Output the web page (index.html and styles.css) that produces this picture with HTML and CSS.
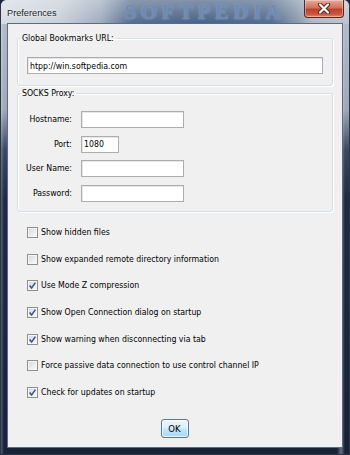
FILE: index.html
```html
<!DOCTYPE html>
<html lang="en">
<head>
<meta charset="utf-8">
<title>Preferences</title>
<link rel="stylesheet" href="styles.css">
</head>
<body>
<div class="window">
  <div class="titlebar">
    <span class="title">Preferences</span>
    <span class="watermark">SOFTPEDIA</span>
    <button class="close" aria-label="Close">
      <svg width="14" height="11" viewBox="0 0 14 11">
        <path d="M3 1.5 L11 9.5 M11 1.5 L3 9.5" stroke="#5a2418" stroke-width="4.2" stroke-linecap="round" fill="none"/>
        <path d="M3 1.5 L11 9.5 M11 1.5 L3 9.5" stroke="#ffffff" stroke-width="2.2" stroke-linecap="round" fill="none"/>
      </svg>
    </button>
  </div>
  <div class="client">
    <fieldset class="group group-url">
      <legend>Global Bookmarks URL:</legend>
      <input class="field field-url" type="text" value="htpp://win.softpedia.com">
    </fieldset>
    <fieldset class="group group-proxy">
      <legend>SOCKS Proxy:</legend>
      <div class="form-grid">
        <label class="form-label">Hostname:</label>
        <input class="field field-md" type="text" value="">
        <label class="form-label">Port:</label>
        <input class="field field-sm" type="text" value="1080">
        <label class="form-label">User Name:</label>
        <input class="field field-md" type="text" value="">
        <label class="form-label">Password:</label>
        <input class="field field-md" type="password" value="">
      </div>
    </fieldset>
    <ul class="checks">
      <li class="check"><span class="cb"></span><span>Show hidden files</span></li>
      <li class="check"><span class="cb"></span><span>Show expanded remote directory information</span></li>
      <li class="check"><span class="cb checked"><svg width="9" height="9" viewBox="0 0 9 9"><path d="M1.6 4.4 L3.6 7 L7.4 1.6" stroke="#3b5692" stroke-width="1.6" fill="none"/></svg></span><span>Use Mode Z compression</span></li>
      <li class="check"><span class="cb checked"><svg width="9" height="9" viewBox="0 0 9 9"><path d="M1.6 4.4 L3.6 7 L7.4 1.6" stroke="#3b5692" stroke-width="1.6" fill="none"/></svg></span><span>Show Open Connection dialog on startup</span></li>
      <li class="check"><span class="cb checked"><svg width="9" height="9" viewBox="0 0 9 9"><path d="M1.6 4.4 L3.6 7 L7.4 1.6" stroke="#3b5692" stroke-width="1.6" fill="none"/></svg></span><span>Show warning when disconnecting via tab</span></li>
      <li class="check"><span class="cb"></span><span>Force passive data connection to use control channel IP</span></li>
      <li class="check"><span class="cb checked"><svg width="9" height="9" viewBox="0 0 9 9"><path d="M1.6 4.4 L3.6 7 L7.4 1.6" stroke="#3b5692" stroke-width="1.6" fill="none"/></svg></span><span>Check for updates on startup</span></li>
    </ul>
    <div class="actions">
      <button class="ok">OK</button>
    </div>
  </div>
</div>
</body>
</html>
```
FILE: styles.css
```css
* { box-sizing: border-box; }
html, body { margin: 0; padding: 0; }
body {
  width: 350px;
  height: 455px;
  overflow: hidden;
  background: #1b2640;
  font-family: "DejaVu Sans Condensed", "DejaVu Sans", sans-serif;
  font-size: 8.7px;
  color: #000;
}
.window {
  width: 350px;
  height: 455px;
  display: flex;
  flex-direction: column;
  padding: 0 7px 7px 7px;
  border: 1px solid #2a3548;
  border-top: none;
  border-radius: 6px 6px 0 0;
  background:
    linear-gradient(90deg, rgba(255,255,255,0.25) 0, rgba(255,255,255,0) 3px, rgba(255,255,255,0) 336px, rgba(255,255,255,0.35) 340px, rgba(255,255,255,0) 344px),
    linear-gradient(180deg, #b6c0cc 0, #9ea9b7 110px, #3a4864 150px, #1e2a44 200px, #17213a 100%);
}
.titlebar {
  height: 24px;
  flex: none;
  display: flex;
  align-items: flex-start;
  margin: 0 -7px;
  padding: 0 0 0 6px;
  overflow: hidden;
  border-radius: 6px 6px 0 0;
  background:
    linear-gradient(180deg, rgba(255,255,255,0.35) 0, rgba(255,255,255,0.05) 24px),
    linear-gradient(90deg, #d4dbe2 0, #c4ccd6 60px, #9aa8ba 100px, #4c6387 130px, #3f587c 200px, #4a6286 270px, #7f8fa6 295px, #a8b2be 310px, #b9c2cc 350px);
}
.title {
  margin-top: 7px;
  font-family: "Liberation Sans", Arial, sans-serif;
  font-size: 9.2px;
  line-height: 12px;
  color: #141a22;
  text-shadow: 0 0 5px rgba(255,255,255,0.9), 0 0 2px rgba(255,255,255,0.9);
}
.watermark {
  margin-left: 68px;
  margin-top: 0;
  font-family: "Liberation Serif", serif;
  font-weight: bold;
  font-size: 21px;
  line-height: 24px;
  letter-spacing: 4.5px;
  color: #6f8bb3;
  text-shadow: 0 0 2px #8ea6c6;
}
.close {
  margin-left: auto;
  margin-right: 5px;
  width: 40px;
  height: 18px;
  padding: 0;
  display: flex;
  align-items: center;
  justify-content: center;
  border: 1px solid #4d2a2a;
  border-top: none;
  border-radius: 0 0 4px 4px;
  background: linear-gradient(180deg, #e9a998 0, #d5705a 45%, #c1402a 55%, #d0583f 85%, #e08a6a 100%);
  box-shadow: inset 0 0 0 1px rgba(255,255,255,0.35);
}
.client {
  flex: 1;
  display: flex;
  flex-direction: column;
  background: #f0f0f0;
  border: 1px solid #eef1f4;
  box-shadow: 0 0 0 1px #5d6b82;
}
.group {
  margin: 7px 8px 0 8px;
  padding: 12px 10px 11px 9px;
  border: 1px solid #d5dfe5;
  border-radius: 3px;
  box-shadow: inset 1px 1px 0 #fff, 1px 1px 0 #fff;
  min-width: 0;
}
.group legend {
  margin-left: -7px;
  padding: 0 2px;
  line-height: 13px;
}
.group-proxy {
  margin-top: 1px;
  padding: 11px 10px 9px 3px;
}
.group-proxy legend {
  margin-left: -1px;
}
.field {
  display: block;
  height: 17px;
  margin: 0;
  padding: 0 2px;
  font-family: inherit;
  font-size: inherit;
  color: #000;
  background: #fff;
  border: 1px solid #abadb3;
  border-radius: 0;
  box-shadow: inset 1px 1px 0 #e6e6e6;
  outline: none;
}
.field-url { width: 296px; }
.form-grid {
  display: grid;
  grid-template-columns: 51px auto;
  column-gap: 9px;
  row-gap: 7.67px;
  align-items: center;
  justify-items: start;
}
.form-label {
  justify-self: end;
  line-height: 17px;
  white-space: nowrap;
}
.field-md { width: 103px; }
.field-sm { width: 38px; }
.checks {
  list-style: none;
  margin: 14px 0 0 18px;
  padding: 0;
  display: flex;
  flex-direction: column;
  gap: 13.67px;
}
.check {
  display: flex;
  align-items: center;
  height: 13px;
  line-height: 13px;
  white-space: nowrap;
}
.cb {
  flex: none;
  width: 11px;
  height: 11px;
  margin-right: 3px;
  display: flex;
  align-items: center;
  justify-content: center;
  border: 1px solid #8e8f8f;
  background: linear-gradient(135deg, #d3d5d8 0, #eceef0 60%, #fafafa 100%);
  box-shadow: inset 0 0 0 1px #f6f6f6;
}
.actions {
  display: flex;
  justify-content: center;
  margin-top: 20px;
  padding-right: 1px;
}
.ok {
  width: 28px;
  height: 19px;
  padding: 0;
  font-family: inherit;
  font-size: 9.5px;
  color: #000;
  border: 1px solid #3c7fb1;
  border-radius: 3px;
  background: linear-gradient(180deg, #eaf6fd 0, #d9f0fc 45%, #bee6fd 55%, #a7d9f5 100%);
  box-shadow: inset 0 0 0 1px rgba(255,255,255,0.7);
}
```
